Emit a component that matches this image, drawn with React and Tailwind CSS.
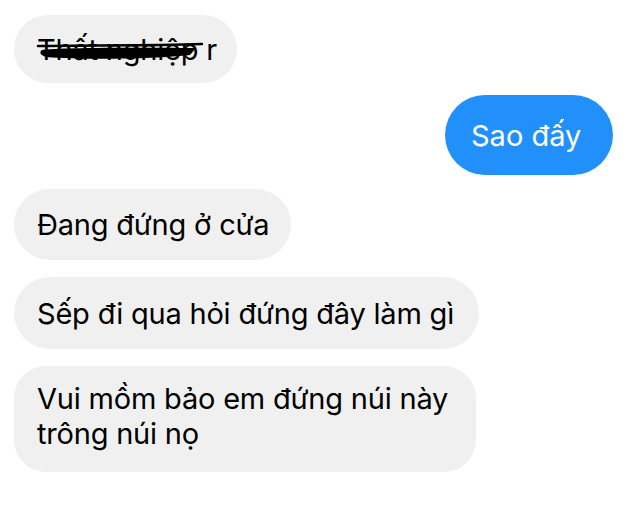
const font = { fontFamily: 'Inter, "Noto Sans", sans-serif' };

const Bubble = ({ children, className = '' }) => (
  <div
    className={`bg-[#f0f0f0] text-black text-[29px] leading-[35px] tracking-[-0.2px] ${className}`}
  >
    {children}
  </div>
);

export default function App() {
  return (
    <div
      className="w-[640px] h-[509px] bg-white overflow-hidden flex flex-col pl-[14px] pt-[15px]"
      style={font}
    >
      <Bubble className="relative w-[223px] h-[68px] rounded-full flex items-center pl-[23px]">
        <span>Thất nghiệp r</span>
        {/* scribble over the first words */}
        <svg
          className="absolute left-[22px] top-[25px]"
          width="172"
          height="24"
          viewBox="0 0 172 24"
          fill="none"
        >
          <path d="M2 6 C50 5 110 6 166 4" stroke="#000" strokeWidth="2.5" strokeLinecap="round" />
          <path
            d="M6 10 C40 7 110 8 160 8 L154 15 C120 19 50 20 10 17 C4 15 3 12 6 10 Z"
            fill="#000"
          />
        </svg>
      </Bubble>

      <div className="self-end mr-[27px] mt-[12px] w-[168px] h-[80px] rounded-full bg-[#2290fb] text-white text-[29px] leading-[35px] flex items-center pl-[26px]">
        Sao đấy
      </div>

      <Bubble className="mt-[14px] w-[277px] h-[71px] rounded-full flex items-center pl-[23px]">
        Đang đứng ở cửa
      </Bubble>

      <Bubble className="mt-[17px] w-[465px] h-[72px] rounded-full flex items-center pl-[23px]">
        Sếp đi qua hỏi đứng đây làm gì
      </Bubble>

      <Bubble className="mt-[17px] w-[462px] h-[106px] rounded-[32px] pl-[23px] pt-[15px]">
        Vui mồm bảo em đứng núi này
        <br />
        trông núi nọ
      </Bubble>
    </div>
  );
}
